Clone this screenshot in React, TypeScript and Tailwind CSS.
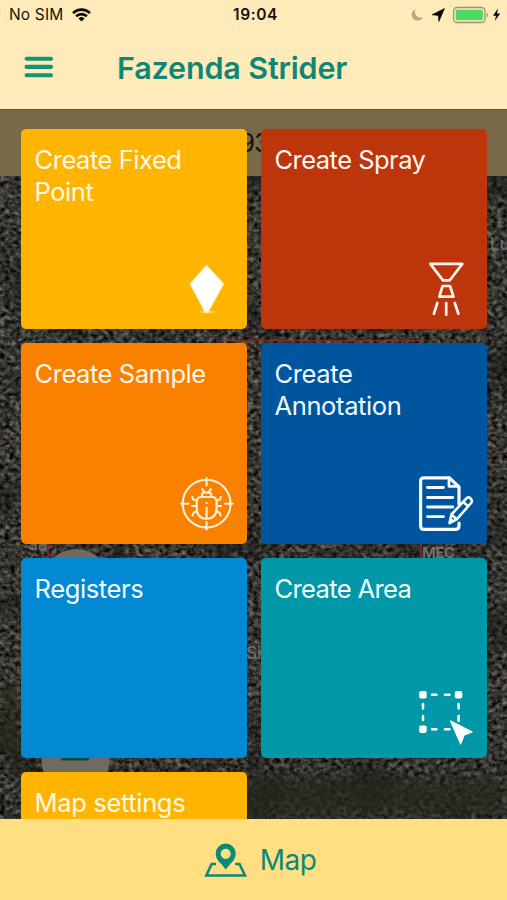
import type { ReactNode } from 'react';

const font = "font-['Inter','Liberation_Sans',sans-serif]";

function WifiIcon() {
  return (
    <svg className="ml-[9px] h-[14px] w-[19px]" viewBox="0 0 19 14" fill="none" stroke="#0c0b06" strokeWidth="2.6">
      <path d="M1 5.1a12.2 12.2 0 0 1 17 0" />
      <path d="M4.1 8.3a7.8 7.8 0 0 1 10.8 0" />
      <path d="M9.5 13.6 6.4 10.5a4.5 4.5 0 0 1 6.2 0Z" fill="#0c0b06" stroke="none" />
    </svg>
  );
}

function StatusBar() {
  return (
    <div className="grid h-[30px] grid-cols-3 items-center pl-[9px] pr-[6px] text-[16px] text-[#171309]">
      <div className="flex items-center">
        <span className="text-[15.5px] tracking-[0.15px]">No SIM</span>
        <WifiIcon />
      </div>
      <div className="pl-[1px] text-center text-[15.5px] font-semibold tracking-[0.6px]">19:04</div>
      <svg className="h-[20px] w-[92px] justify-self-end" viewBox="409 5 92 20">
        <path d="M415.5 9a6 6 0 1 0 7.5 8.3 6 6 0 0 1-7.5-8.3Z" fill="#b5a782" />
        <path d="M444.5 8.5 432 14.8l6.3.6.6 6.1Z" fill="#080704" stroke="#080704" strokeWidth="0.6" />
        <rect x="453.6" y="7.5" width="31.4" height="15" rx="3.6" fill="none" stroke="#9d9271" strokeWidth="1.3" />
        <rect x="455.7" y="9.7" width="27.2" height="10.6" rx="1.3" fill="#4cd964" />
        <path d="M486.7 12.2q2.6 2.8 0 5.6Z" fill="#9d9271" />
        <path d="M498 8.3 493 15.7h3.1l-1.4 5.3 5.5-7.5H497Z" fill="#080704" />
      </svg>
    </div>
  );
}

function Header() {
  return (
    <header className="h-[109px] bg-[#ffebb9]">
      <StatusBar />
      <div className="flex h-[76px] items-center">
        <svg className="mb-[2px] ml-[24px] h-[22px] w-[30px]" viewBox="0 0 30 22" stroke="#169279" strokeWidth="4.1" strokeLinecap="round">
          <path d="M2.6 2.7h24.4M2.6 10.9h24.4M2.6 19.2h24.4" />
        </svg>
        <h1 className="ml-[63px] whitespace-nowrap text-[30.5px] font-semibold tracking-[-0.16px] text-[#108676]">Fazenda Strider</h1>
      </div>
    </header>
  );
}

function SatelliteMap() {
  return (
    <svg className={`absolute inset-0 h-full w-full ${font}`} viewBox="0 109 507 710" preserveAspectRatio="none">
      <defs>
        <filter id="terrain" x="0" y="0" width="100%" height="100%" colorInterpolationFilters="sRGB">
          <feTurbulence type="fractalNoise" baseFrequency="0.193 0.237" numOctaves="4" seed="8" />
          <feColorMatrix values="0.6 0.35 0 0 -0.255  0.58 0.35 0 0 -0.255  0.54 0.32 0 0 -0.24  0 0 0 0 1" />
        </filter>
        <filter id="patches" x="0" y="0" width="100%" height="100%" colorInterpolationFilters="sRGB">
          <feTurbulence type="fractalNoise" baseFrequency="0.021" numOctaves="4" seed="14" />
          <feColorMatrix values="0 0 0 0 0.07  0 0 0 0 0.09  0 0 0 0 0.08  2.8 0 0 0 -1.3" />
        </filter>
        <filter id="blur"><feGaussianBlur stdDeviation="8" /></filter>
      </defs>
      <rect y="109" width="507" height="710" filter="url(#terrain)" />
      <rect y="109" width="507" height="710" filter="url(#patches)" opacity="0.6" />
      <path d="M240 775H507V819H240ZM0 690 20 680V770L0 750Z" fill="#25271d" opacity="0.75" filter="url(#blur)" />
      <g fill="none" stroke="#3d3a32">
        <path d="M480 225 507 233M490 460 507 438M498 690q12 35-7 78-12 20-35 32" />
        <path d="M400 790q13-7 22-16" />
      </g>
      <path d="M220 340.5H423M48 528V559M421 543V559" fill="none" stroke="#7d3025" strokeWidth="1.7" />
      <circle cx="76" cy="582" r="33" fill="#706a5f" />
      <circle cx="75.5" cy="760" r="34" fill="#706a5f" />
      <path d="M61 754H89V760.5H61Z" fill="#164944" />
      <g fill="#77736c" fontSize="17">
        <text x="490" y="250">Lu</text>
        <text x="247" y="412">r</text>
        <text x="27" y="550">Sa</text>
        <text x="422" y="558" fontSize="15" fontWeight="600" letterSpacing="-0.6">MEC</text>
        <text x="246" y="659">Si</text>
      </g>
      <rect y="109" width="507" height="67" fill="#786a48" />
      <path d="M0 109.4H507" stroke="#625638" />
      <text x="239.5" y="152" fontSize="25" letterSpacing="-0.8" fill="#12100b">93</text>
    </svg>
  );
}

function PinIcon() {
  return (
    <svg className="absolute right-[21px] bottom-[14px] h-[53px] w-[38px]" viewBox="188 262 38 53">
      <ellipse cx="207" cy="312" rx="8" ry="1.5" fill="#ffd05a" />
      <path d="M206.5 265.8 223.2 284 208 311.6q-1.4 1-2.8 0L190.4 284Z" fill="#fff" stroke="#fff5dc" strokeWidth="1.4" strokeLinejoin="round" />
    </svg>
  );
}

function SprayIcon() {
  return (
    <svg className="absolute right-[20px] bottom-[12px] h-[56px] w-[40px]" viewBox="427 261 40 56" fill="none" stroke="#fff3ed" strokeWidth="2.7" strokeLinejoin="round" strokeLinecap="round">
      <path d="M430.3 263.9h32l-12.5 16.4h-6.8ZM442.6 286h7.4l3.5 10.6H439.3ZM437.3 303l-3.4 10.8M446.2 303v11.8M454.8 303l3.6 10.8" />
    </svg>
  );
}

function BugIcon() {
  return (
    <svg className="absolute right-[13px] bottom-[13px] h-[56px] w-[56px]" viewBox="178 475 56 56" fill="none" stroke="#fff0d6" strokeWidth="2.1" strokeLinecap="round" strokeLinejoin="round">
      <circle cx="206.6" cy="503.7" r="23.9" />
      <path d="M206.6 478v7.5M206.6 522v7.5M181 503.7h7.5M225 503.7h7.5" />
      <path d="M196.7 502q0-5 4.3-5h11.3q4.3 0 4.3 5v6q0 10.5-10 10.8-9.9-.3-9.9-10.8Z" />
      <path d="M202 497v-3.3q4.6-2.6 9.2 0v3.3M202.3 489.2l2.4 3.5M210.8 489.2l-2.4 3.5M206.6 502.7v.2M206.6 507.5v10.5" />
      <path d="M196.7 500.5l-3.6-1.1-.7-2.4M196.5 506h-4.4M197 511.2l-3.4 1.5-1 2.8M216.5 500.5l3.6-1.1.7-2.4M216.7 506h4.4M216.2 511.2l3.4 1.5 1 2.8" />
    </svg>
  );
}

function AnnotationIcon() {
  return (
    <svg className="absolute right-[12px] bottom-[12px] h-[57px] w-[58px]" viewBox="417 475 58 57" fill="none" stroke="#f7fbff" strokeWidth="3.2" strokeLinecap="round" strokeLinejoin="round">
      <path d="M459 504V487L449.5 477.8H424Q420.6 477.8 420.6 481.2V526Q420.6 529.4 424 529.4H455.6Q459 529.4 459 526V523" />
      <path d="M449 478v8.3h9.3M427.5 487.5h16M427.5 497.5h25.3M427.5 507h25.3M427.5 516.6h16" strokeWidth="2.8" />
      <path d="M449.5 523.2 451.4 514.5 466.4 498.4Q468.5 496.5 470.6 498.5 472.9 500.6 471.1 503L456.7 519.3ZM463.2 501.8l4.6 4.3M452 515l4 3.7" fill="#00569e" strokeWidth="2.6" />
      <path d="M450 522.3l1-3.9 2.5 2.3Z" fill="#fff" strokeWidth="1" />
    </svg>
  );
}

function AreaIcon() {
  return (
    <svg className="absolute right-[12px] bottom-[11px] h-[58px] w-[58px]" viewBox="417 689 58 58" fill="#fff">
      <rect x="419.2" y="691" width="7.5" height="7.5" rx="1.8" />
      <rect x="454.8" y="691" width="7.5" height="7.5" rx="1.8" />
      <rect x="419.2" y="725.4" width="7.5" height="7.5" rx="1.8" />
      <path d="M432 694.7h4.5M445 694.7h4.5M423 704v4.4M423 716v4M458.6 704v4.4M458.6 716v5M432 729.2h4.5M445 729.2h4.5" stroke="#fff" strokeWidth="2.5" strokeLinecap="round" />
      <path d="M451 720.5 472.5 731.5Q473.2 732 472.4 732.5L464.6 735.6 461.2 744.2Q460.8 745 460.2 744.2L450.1 721.4Q449.8 720 451 720.5Z" />
    </svg>
  );
}

const tiles: { label: string; color: string; text: string; icon?: ReactNode }[] = [
  { label: 'Create Fixed Point', color: 'bg-[#ffb400]', text: 'tracking-[-0.45px] text-[#fff8e5]', icon: <PinIcon /> },
  { label: 'Create Spray', color: 'bg-[#bd350b]', text: 'tracking-[-0.53px] text-[#fff8f3]', icon: <SprayIcon /> },
  { label: 'Create Sample', color: 'bg-[#fa8000]', text: 'tracking-[-0.45px] text-[#fff8ed]', icon: <BugIcon /> },
  { label: 'Create Annotation', color: 'bg-[#00569e]', text: 'tracking-[-0.37px] text-[#f3f9ff]', icon: <AnnotationIcon /> },
  { label: 'Registers', color: 'bg-[#0389d3]', text: 'tracking-[-0.38px] text-[#f3fbff]' },
  { label: 'Create Area', color: 'bg-[#0098a8]', text: 'tracking-[-0.63px] text-[#f3ffff]', icon: <AreaIcon /> },
  { label: 'Map settings', color: 'bg-[#ffb400]', text: 'tracking-[-0.34px] text-[#fff8e5]' },
];

export default function App() {
  return (
    <div className={`flex h-[900px] w-[507px] flex-col overflow-hidden ${font}`}>
      <Header />
      <main className="relative h-[710px] overflow-hidden bg-[#30302b]">
        <SatelliteMap />
        <div className="relative grid auto-rows-[200.5px] grid-cols-2 gap-[14px] pl-[21px] pr-[20px] pt-[19.5px]">
          {tiles.map((tile) => (
            <section key={tile.label} className={`relative rounded-[5px] pl-[13.5px] pr-[34px] pt-[15px] ${tile.color}`}>
              <h2 className={`text-[25.5px] leading-[32px] ${tile.text}`}>{tile.label}</h2>
              {tile.icon}
            </section>
          ))}
        </div>
      </main>
      <footer className="flex h-[81px] items-center justify-center gap-[13px] bg-[#ffdf82] pl-[12px] text-[#0b8978]">
        <svg className="h-[36px] w-[44px]" viewBox="203 841 44 36">
          <path d="M216 863h-4.3L206.3 874.5H245L239.5 863h-4.3" fill="none" stroke="currentColor" strokeWidth="2.6" />
          <path fillRule="evenodd" d="M225.7 842.5a10 10 0 0 0-10 10.2c0 4.5 2.7 7.5 5.6 10.4l4.4 5.4 4.5-5.4c2.8-2.9 5.5-5.9 5.5-10.4a10 10 0 0 0-10-10.2Zm0 5.2a5.1 5.1 0 1 1 0 10.2 5.1 5.1 0 0 1 0-10.2Z" fill="currentColor" />
        </svg>
        <span className="text-[28px] tracking-[-0.5px]">Map</span>
      </footer>
    </div>
  );
}
